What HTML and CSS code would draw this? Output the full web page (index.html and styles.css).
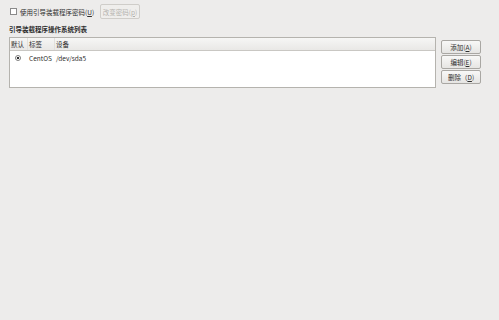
FILE: index.html
```html
<!DOCTYPE html>
<html lang="zh-CN">
<head>
    <meta charset="UTF-8">
    <title>引导装载程序</title>
    <link rel="stylesheet" href="styles.css">
</head>
<body>
    <div class="top-row">
        <label class="check">
            <span class="check-box"></span>
            <span>使用引导装载程序密码(<u>U</u>)</span>
        </label>
        <button class="btn btn-disabled" type="button" disabled>改变密码(<u>p</u>)</button>
    </div>

    <h2 class="section-title">引导装载程序操作系统列表</h2>

    <div class="list-area">
        <div class="os-list">
            <div class="list-head">
                <span class="col col-default">默认</span>
                <span class="col col-label">标签</span>
                <span class="col col-device">设备</span>
            </div>
            <div class="list-row">
                <span class="col col-default"><span class="radio"></span></span>
                <span class="col col-label">CentOS</span>
                <span class="col col-device">/dev/sda5</span>
            </div>
        </div>
        <div class="side-buttons">
            <button class="btn" type="button">添加(<u>A</u>)</button>
            <button class="btn" type="button">编辑(<u>E</u>)</button>
            <button class="btn" type="button">删除（<u>D</u>)</button>
        </div>
    </div>
</body>
</html>
```

FILE: styles.css
```css
body {
    margin: 0;
    background-color: #edeceb;
    font-family: "Noto Sans CJK SC", "DejaVu Sans", sans-serif;
    font-size: 6.5px;
    color: #2e2e2e;
}
u {
    text-decoration: underline;
}
.top-row {
    display: flex;
    align-items: center;
    height: 15px;
    padding: 4px 0 0 10px;
}
.check {
    display: flex;
    align-items: center;
    gap: 3px;
    width: 90px;
}
.check-box {
    width: 5px;
    height: 5px;
    border: 1px solid #8a8a8a;
    background-color: #fff;
}
.btn {
    font-family: inherit;
    font-size: 6.5px;
    color: #2e2e2e;
    background: linear-gradient(#f8f8f7, #e6e5e3);
    border: 1px solid #a9a7a3;
    border-radius: 2px;
    padding: 0;
    height: 14px;
    width: 40px;
    line-height: 12px;
}
.btn-disabled {
    color: #b3b1ad;
    background: #efeeec;
    border-color: #cfcdc9;
    height: 15px;
}
.section-title {
    margin: 0;
    padding: 5px 0 0 9px;
    font-size: 6.5px;
    font-weight: bold;
    height: 13px;
    line-height: 10px;
}
.list-area {
    display: flex;
    padding-left: 9px;
}
.os-list {
    width: 425px;
    height: 49px;
    border: 1px solid #b5b3ae;
    background-color: #fff;
}
.list-head {
    display: flex;
    height: 12px;
    line-height: 12px;
    background: linear-gradient(#f6f6f5, #e9e8e6);
    border-bottom: 1px solid #c9c7c3;
}
.list-head .col {
    border-right: 1px solid #e2e0dc;
}
.list-head .col-device {
    border-right: none;
}
.list-row {
    display: flex;
    height: 12px;
    line-height: 12px;
    margin-top: 1px;
}
.list-row .col {
    border-right: 1px solid transparent;
}
.col {
    padding-left: 1px;
}
.col-default {
    width: 16px;
    display: flex;
    align-items: center;
}
.col-label {
    width: 25px;
}
.col-device {
    flex: 1;
}
.radio {
    width: 4px;
    height: 4px;
    border: 1px solid #7e7e7e;
    border-radius: 50%;
    background: radial-gradient(circle, #2e2e2e 0 1px, #fff 1.4px);
    margin-left: 4px;
}
.side-buttons {
    display: flex;
    flex-direction: column;
    gap: 1px;
    padding: 3px 0 0 5px;
}
```
